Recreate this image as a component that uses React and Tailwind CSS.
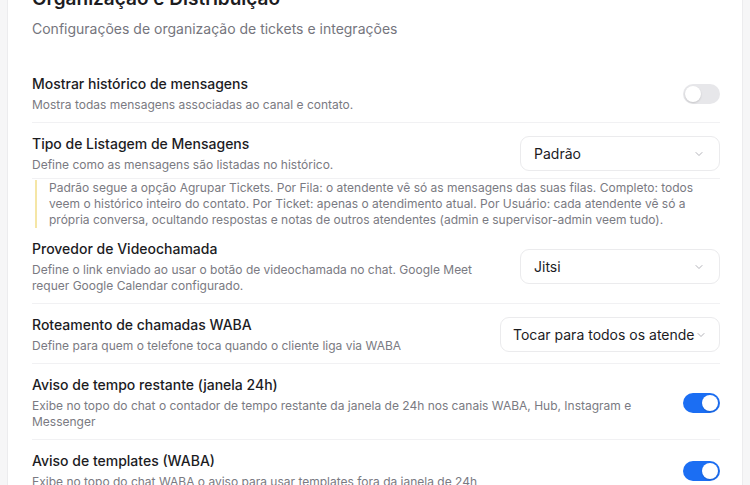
import { ChevronDown } from 'lucide-react';

const font = { fontFamily: 'Inter, "Noto Sans", sans-serif' };

function Toggle({ on }) {
  return (
    <div
      className={
        on
          ? 'w-[37px] h-[20px] rounded-full bg-[#1b6ef3] p-[2px] flex justify-end shrink-0'
          : 'w-[37px] h-[20px] rounded-full bg-[#e7e7ea] p-[2px] flex justify-start shrink-0'
      }
    >
      <div className="w-[16px] h-[16px] rounded-full bg-white shadow-[0_1px_2px_rgba(0,0,0,0.15)]" />
    </div>
  );
}

function Select({ value, wide }) {
  return (
    <div
      className={
        (wide ? 'w-[220px] pl-[12px] pr-[12px]' : 'w-[200px] pl-[13px] pr-[14px]') +
        ' h-[35px] shrink-0 flex items-center rounded-[9px] border border-[#ebebed] bg-white'
      }
    >
      <span className="flex-1 overflow-hidden whitespace-nowrap text-[14px] text-[#1c1c1f]">{value}</span>
      <ChevronDown size={12} strokeWidth={1.5} className="text-[#9a9aa2] shrink-0" />
    </div>
  );
}

function Row({ title, desc, right, border = true, pb = 'pb-[9px]' }) {
  return (
    <div className={(border ? 'border-b border-[#f1f1f3] ' : '') + 'flex items-center gap-10 pt-[11px] ' + pb}>
      <div className="flex-1 min-w-0">
        <div className="text-[14px] leading-5 font-medium text-[#1c1c1f]">{title}</div>
        <div className="mt-[3px] text-[12px] leading-4 text-[#7a7a82]">{desc}</div>
      </div>
      {right}
    </div>
  );
}

export default function App() {
  return (
    <div className="h-[485px] bg-[#f6f6f7] px-[7px] overflow-hidden" style={font}>
      <div className="-mt-[16px] bg-white border border-[#ececee] rounded-[10px] pl-6 pr-[22px] pb-10">
        <h2 className="text-[19px] leading-7 font-semibold text-[#1c1c1f]">Organização e Distribuição</h2>
        <p className="mt-[4px] text-[14px] leading-6 text-[#75757d]">
          Configurações de organização de tickets e integrações
        </p>

        <div className="mt-[22px]">
          <Row
            title="Mostrar histórico de mensagens"
            desc="Mostra todas mensagens associadas ao canal e contato."
            right={<Toggle on={false} />}
          />
          <Row
            title="Tipo de Listagem de Mensagens"
            desc="Define como as mensagens são listadas no histórico."
            pb="pb-[5px]"
            right={
              <div className="w-[252px] flex justify-end shrink-0">
                <Select value="Padrão" />
              </div>
            }
          />
          <div className="mt-[1px] ml-[3px] border-l-2 border-[#f5e6a6] pl-[12px] pr-[18px] text-[12px] leading-4 text-[#7a7a82]">
            Padrão segue a opção Agrupar Tickets. Por Fila: o atendente vê só as mensagens das suas filas. Completo: todos
            veem o histórico inteiro do contato. Por Ticket: apenas o atendimento atual. Por Usuário: cada atendente vê só a
            própria conversa, ocultando respostas e notas de outros atendentes (admin e supervisor-admin veem tudo).
          </div>
          <Row
            title="Provedor de Videochamada"
            desc={
              <span className="block mt-[1px]">
                Define o link enviado ao usar o botão de videochamada no chat. Google Meet requer Google Calendar configurado.
              </span>
            }
            right={<Select value="Jitsi" />}
          />
          <Row
            title="Roteamento de chamadas WABA"
            desc="Define para quem o telefone toca quando o cliente liga via WABA"
            right={<Select value="Tocar para todos os atendentes" wide />}
          />
          <Row
            title="Aviso de tempo restante (janela 24h)"
            desc="Exibe no topo do chat o contador de tempo restante da janela de 24h nos canais WABA, Hub, Instagram e Messenger"
            right={<Toggle on />}
          />
          <Row
            title="Aviso de templates (WABA)"
            desc="Exibe no topo do chat WABA o aviso para usar templates fora da janela de 24h"
            right={<Toggle on />}
          />
        </div>
      </div>
    </div>
  );
}
